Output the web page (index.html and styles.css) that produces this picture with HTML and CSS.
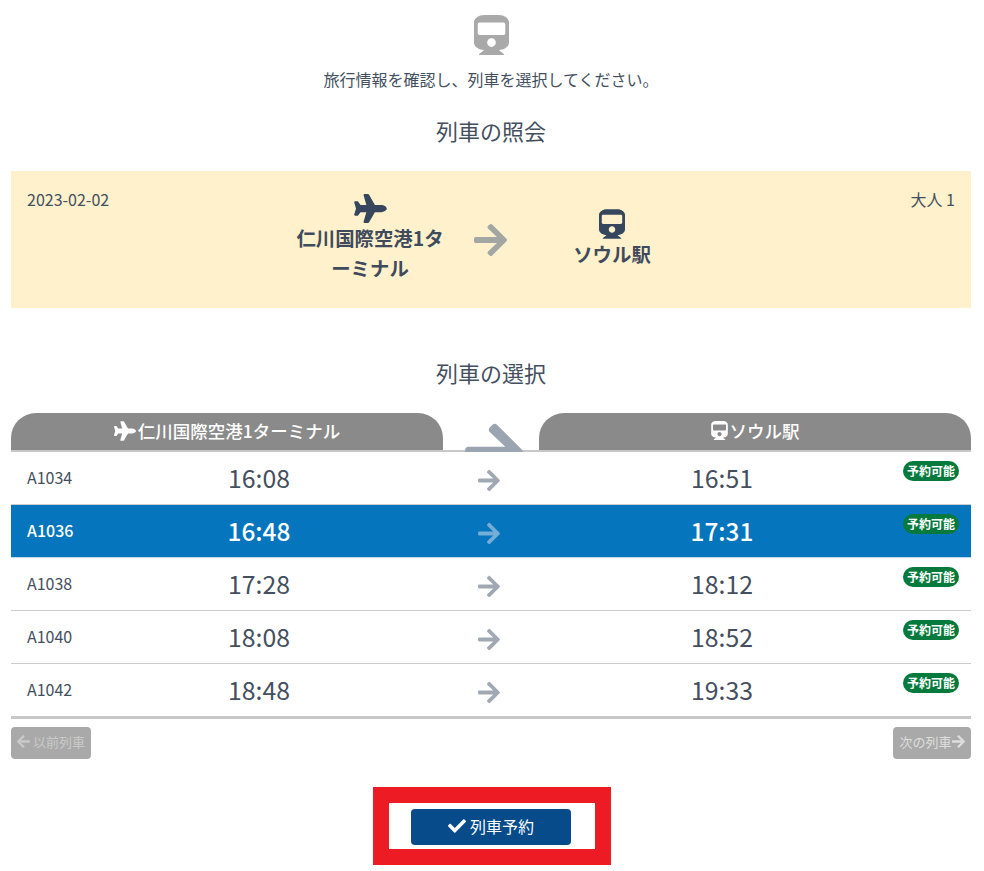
FILE: index.html
```html
<!DOCTYPE html>
<html lang="ja">
<head>
    <meta charset="UTF-8">
    <meta name="viewport" content="width=device-width, initial-scale=1.0">
    <title>列車の選択</title>
    <link rel="stylesheet" href="styles.css">
</head>
<body>
    <svg class="sprites" aria-hidden="true">
        <symbol id="i-train" viewBox="0 0 448 512"><path d="M448 96v256c0 51.815-61.624 96-130.022 96l62.98 49.721C386.905 502.417 383.562 512 376 512H72c-7.578 0-10.892-9.594-4.957-14.279L130.022 448C61.82 448 0 403.954 0 352V96C0 42.981 64 0 128 0h192c65 0 128 42.981 128 96zm-48 136V120c0-13.255-10.745-24-24-24H72c-13.255 0-24 10.745-24 24v112c0 13.255 10.745 24 24 24h304c13.255 0 24-10.745 24-24zm-176 64c-30.928 0-56 25.072-56 56s25.072 56 56 56 56-25.072 56-56-25.072-56-56-56z"/></symbol>
        <symbol id="i-plane" viewBox="0 0 576 512"><path d="M480 192H365.71L260.61 8.06A16.014 16.014 0 0 0 246.71 0h-65.5c-10.63 0-18.3 10.17-15.38 20.39L214.86 192H112l-43.2-57.6c-3.02-4.03-7.77-6.4-12.8-6.4H16.01C5.6 128-2.04 137.78.49 147.88L32 256 .49 364.12C-2.04 374.22 5.6 384 16.01 384H56c5.04 0 9.78-2.37 12.8-6.4L112 320h102.86l-49.03 171.6c-2.92 10.22 4.75 20.4 15.38 20.4h65.5c5.74 0 11.04-3.08 13.89-8.06L365.71 320H480c35.35 0 96-28.65 96-64s-60.65-64-96-64z"/></symbol>
        <symbol id="i-arrow" viewBox="0 0 448 512"><path d="M190.5 66.9l22.2-22.2c9.4-9.4 24.6-9.4 33.9 0L441 239c9.4 9.4 9.4 24.6 0 33.9L246.6 467.3c-9.4 9.4-24.6 9.4-33.9 0l-22.2-22.2c-9.5-9.5-9.3-25 .4-34.3L311.4 296H24c-13.3 0-24-10.7-24-24v-32c0-13.3 10.7-24 24-24h287.4L190.9 101.2c-9.8-9.3-10-24.8-.4-34.3z"/></symbol>
        <symbol id="i-arrow-left" viewBox="0 0 448 512"><path d="M257.5 445.1l-22.2 22.2c-9.4 9.4-24.6 9.4-33.9 0L7 273c-9.4-9.4-9.4-24.6 0-33.9L201.4 44.7c9.4-9.4 24.6-9.4 33.9 0l22.2 22.2c9.5 9.5 9.3 25-.4 34.3L136.6 216H424c13.3 0 24 10.7 24 24v32c0 13.3-10.7 24-24 24H136.6l120.5 114.8c9.8 9.3 10 24.8.4 34.3z"/></symbol>
        <symbol id="i-check" viewBox="0 0 512 512"><path d="M173.898 439.404l-166.4-166.4c-9.997-9.997-9.997-26.206 0-36.204l36.203-36.204c9.997-9.998 26.207-9.998 36.204 0L192 312.69 432.095 72.596c9.997-9.997 26.207-9.997 36.204 0l36.203 36.204c9.997 9.997 9.997 26.206 0 36.204l-294.4 294.401c-9.998 9.997-26.207 9.997-36.204-.001z"/></symbol>
    </svg>

    <div class="container">
        <div class="intro">
            <svg class="intro-icon"><use href="#i-train"/></svg>
            <p>旅行情報を確認し、列車を選択してください。</p>
        </div>

        <h2 class="title">列車の照会</h2>

        <!-- Trip summary -->
        <div class="summary">
            <div class="summary-date">2023-02-02</div>
            <div class="place">
                <svg class="place-plane"><use href="#i-plane"/></svg>
                <div>仁川国際空港1ターミナル</div>
            </div>
            <svg class="summary-arrow"><use href="#i-arrow"/></svg>
            <div class="place">
                <svg class="place-train"><use href="#i-train"/></svg>
                <div>ソウル駅</div>
            </div>
            <div class="summary-people">大人 1</div>
        </div>

        <h2 class="title title-select">列車の選択</h2>

        <!-- Train list -->
        <div class="list-head">
            <div class="pill"><svg class="pill-plane"><use href="#i-plane"/></svg>仁川国際空港1ターミナル</div>
            <div class="head-arrow"><svg><use href="#i-arrow"/></svg></div>
            <div class="pill"><svg class="pill-train"><use href="#i-train"/></svg>ソウル駅</div>
        </div>

        <div class="list">
            <div class="row">
                <div class="row-id">A1034</div>
                <div class="row-time">16:08</div>
                <svg class="row-arrow"><use href="#i-arrow"/></svg>
                <div class="row-time">16:51</div>
                <span class="badge">予約可能</span>
            </div>
            <div class="row selected">
                <div class="row-id">A1036</div>
                <div class="row-time">16:48</div>
                <svg class="row-arrow"><use href="#i-arrow"/></svg>
                <div class="row-time">17:31</div>
                <span class="badge">予約可能</span>
            </div>
            <div class="row">
                <div class="row-id">A1038</div>
                <div class="row-time">17:28</div>
                <svg class="row-arrow"><use href="#i-arrow"/></svg>
                <div class="row-time">18:12</div>
                <span class="badge">予約可能</span>
            </div>
            <div class="row">
                <div class="row-id">A1040</div>
                <div class="row-time">18:08</div>
                <svg class="row-arrow"><use href="#i-arrow"/></svg>
                <div class="row-time">18:52</div>
                <span class="badge">予約可能</span>
            </div>
            <div class="row">
                <div class="row-id">A1042</div>
                <div class="row-time">18:48</div>
                <svg class="row-arrow"><use href="#i-arrow"/></svg>
                <div class="row-time">19:33</div>
                <span class="badge">予約可能</span>
            </div>
        </div>

        <div class="pager">
            <button class="pager-btn prev"><svg><use href="#i-arrow-left"/></svg>以前列車</button>
            <button class="pager-btn next">次の列車<svg><use href="#i-arrow"/></svg></button>
        </div>

        <div class="confirm">
            <div class="confirm-frame">
                <button class="confirm-btn"><svg><use href="#i-check"/></svg>列車予約</button>
            </div>
        </div>
    </div>
</body>
</html>
```

FILE: styles.css
```css
body {
    margin: 0;
    background-color: #fff;
    color: #444f5e;
    font-family: "Noto Sans CJK JP", "Noto Sans", sans-serif;
    font-size: 16px;
}
svg {
    fill: currentColor;
}
button {
    font-family: inherit;
    border: none;
    cursor: pointer;
}
.sprites {
    display: none;
}
.container {
    width: 960px;
    margin-left: 11px;
}
.intro {
    padding-top: 15px;
    text-align: center;
}
.intro-icon {
    display: block;
    width: 35px;
    height: 40px;
    margin: 0 auto;
    color: #a9a9a9;
}
.intro p {
    margin: 11px 0 0;
    line-height: 26px;
    font-size: 16px;
}
.title {
    margin: 0;
    font-size: 22px;
    font-weight: 400;
    line-height: 32px;
    text-align: center;
}
.intro + .title {
    margin-top: 22px;
}
.title-select {
    margin-top: 48px;
}

/* summary */
.summary {
    display: grid;
    grid-template-columns: 1fr 152px 90px 152px 1fr;
    align-items: center;
    height: 137px;
    margin-top: 25px;
    padding: 0 16px;
    background-color: #fff1cc;
}
.summary-date,
.summary-people {
    align-self: start;
    margin-top: 16px;
    line-height: 24px;
}
.summary-people {
    text-align: right;
}
.place {
    margin-bottom: 2px;
    text-align: center;
    font-size: 19.4px;
    font-weight: 700;
    line-height: 30px;
    color: #3f4b5c;
}
.place svg {
    display: block;
    margin: 0 auto;
    color: #36465d;
}
.place-plane {
    width: 33px;
    height: 29px;
}
.place-train {
    width: 26px;
    height: 30px;
}
.summary-arrow {
    width: 33px;
    height: 38px;
    margin-right: 2px;
    justify-self: center;
    color: #a3a6a2;
}

/* list */
.list-head {
    display: grid;
    grid-template-columns: 432px 96px 432px;
    height: 37px;
    margin-top: 25px;
    border-bottom: 2px solid #c8c8c8;
}
.pill {
    display: flex;
    align-items: center;
    justify-content: center;
    height: 37px;
    padding-bottom: 2px;
    box-sizing: border-box;
    border-radius: 25px 25px 0 0;
    background-color: #8a8a8a;
    color: #fff;
    font-size: 17.5px;
    font-weight: 500;
}
.pill-plane {
    width: 22px;
    height: 20px;
    margin-right: 2px;
}
.pill-train {
    width: 17px;
    height: 19px;
    margin-right: 2px;
}
.head-arrow {
    height: 39px;
    overflow: hidden;
    text-align: center;
    color: #9aa5b1;
}
.head-arrow svg {
    width: 58px;
    height: 66px;
    margin: 6px 0 0 6px;
}
.row {
    display: grid;
    grid-template-columns: 96px 304px 156px 310px 94px;
    align-items: center;
    height: 52px;
    border-bottom: 1px solid #ccc;
}
.list {
    border-bottom: 3px solid #c8c8c8;
}
.row:last-child {
    border-bottom: none;
}
.row-id {
    margin-bottom: 2px;
    padding-left: 16px;
    font-size: 16px;
}
.row-time {
    margin-bottom: 2px;
    text-align: center;
    font-size: 24.8px;
    font-weight: 400;
}
.row-arrow {
    justify-self: center;
    width: 22px;
    height: 25px;
    margin-top: 4px;
    color: #a0a9b3;
}
.badge {
    align-self: start;
    justify-self: end;
    width: 56px;
    height: 20px;
    margin: 9px 12px 0 0;
    border-radius: 10px;
    background-color: #057a3c;
    color: #fff;
    font-size: 12px;
    font-weight: 700;
    line-height: 19px;
    text-align: center;
}
.row.selected {
    background-color: #0575be;
    border-bottom-color: #bcd9ec;
    color: #fff;
}
.row.selected .row-id {
    font-weight: 500;
}
.row.selected .row-time {
    font-size: 24.4px;
    font-weight: 500;
}
.row.selected .row-arrow {
    color: #76add7;
}

/* buttons */
.pager {
    display: flex;
    justify-content: space-between;
    margin-top: 8px;
}
.pager-btn {
    display: flex;
    align-items: center;
    justify-content: center;
    height: 32px;
    padding: 0 0 3px;
    border-radius: 4px;
    background-color: #a9a9a9;
    font-size: 13px;
}
.pager-btn svg {
    width: 13px;
    height: 15px;
}
.prev {
    width: 80px;
    color: #c9c9c9;
}
.prev svg {
    margin-right: 3px;
}
.next {
    width: 78px;
    color: #dedede;
}
.confirm {
    display: flex;
    justify-content: center;
    margin-top: 28px;
    padding-left: 2px;
}
.confirm-frame {
    padding: 6px 24px 4px 22px;
    border: 16px solid #ed1c24;
}
.confirm-btn {
    display: flex;
    align-items: center;
    justify-content: center;
    width: 160px;
    height: 36px;
    padding: 0 0 3px;
    border-radius: 4px;
    background-color: #074b8b;
    color: #fff;
    font-size: 16px;
}
.confirm-btn svg {
    width: 18px;
    height: 18px;
    margin-right: 4px;
}
```
